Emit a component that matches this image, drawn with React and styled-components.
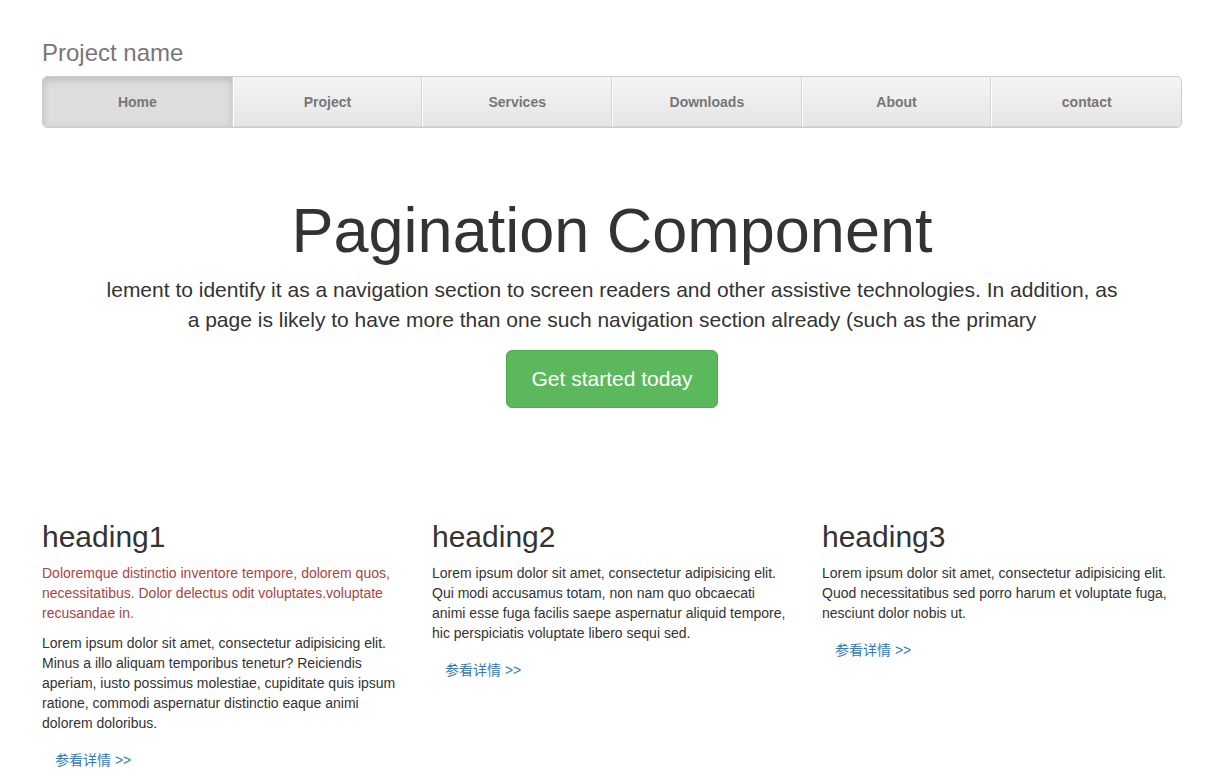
import React from 'react';
import styled, { createGlobalStyle } from 'styled-components';

const GlobalStyle = createGlobalStyle`
  html, body {
    margin: 0;
    padding: 0;
  }
  body {
    padding-top: 20px;
    font-family: "Liberation Sans", Helvetica, Arial, "Noto Sans CJK SC", sans-serif;
    font-size: 14px;
    line-height: 1.42857143;
    color: #333;
    background: #fff;
  }
  * { box-sizing: border-box; }
`;

const Container = styled.div`
  width: 1170px;
  margin: 0 auto;
  padding: 0 15px;
`;

const Masthead = styled.div``;

const ProjectName = styled.h3`
  margin: 20px 0 10px;
  font-size: 24px;
  font-weight: 500;
  line-height: 1.1;
  color: #777;
`;

const Nav = styled.ul`
  display: flex;
  margin: 0;
  padding: 0;
  list-style: none;
  max-height: 52px;
  background-color: #eee;
  border: 1px solid #ccc;
  border-radius: 5px;
`;

const NavItem = styled.li`
  flex: 1 1 0;
  display: flex;
`;

const NavLink = styled.a`
  flex: 1;
  display: block;
  padding: 15px 0;
  font-weight: bold;
  font-size: 14px;
  line-height: 20px;
  color: #777;
  text-align: center;
  text-decoration: none;
  border-bottom: 1px solid #d5d5d5;
  border-left: ${(p) => (p.$first ? '0' : '1px solid #fff')};
  border-right: ${(p) => (p.$last ? '0' : '1px solid #d5d5d5')};
  border-radius: ${(p) => (p.$first ? '5px 0 0 5px' : p.$last ? '0 5px 5px 0' : '0')};
  background-color: ${(p) => (p.$active ? '#ddd' : '#e5e5e5')};
  background-image: ${(p) => (p.$active ? 'none' : 'linear-gradient(to bottom, #f5f5f5 0%, #e5e5e5 100%)')};
  box-shadow: ${(p) => (p.$active ? 'inset 0 3px 7px rgba(0,0,0,.15)' : 'none')};
`;

const Jumbotron = styled.div`
  padding: 48px 60px;
  margin-bottom: 30px;
  text-align: center;
`;

const Title = styled.h1`
  margin: 20px 0 9px;
  font-size: 63px;
  font-weight: 500;
  line-height: 1.1;
  color: #333;
`;

const Lead = styled.p`
  margin: 0 0 15px;
  font-size: 21px;
  line-height: 30px;
  font-weight: 200;
`;

const BigButton = styled.a`
  display: inline-block;
  padding: 14px 24px;
  font-size: 21px;
  line-height: 1.3333;
  color: #fff;
  text-decoration: none;
  background-color: #5cb85c;
  border: 1px solid #4cae4c;
  border-radius: 6px;
`;

const Row = styled.div`
  display: grid;
  grid-template-columns: repeat(3, 1fr);
  margin: 0 -15px;
  padding-top: 14px;
`;

const Col = styled.div`
  padding: 0 15px;
`;

const Heading = styled.h2`
  margin: 20px 0 10px;
  font-size: 30px;
  font-weight: 500;
  line-height: 1.1;
`;

const Text = styled.p`
  margin: 0 0 10px;
  color: ${(p) => (p.$danger ? '#a94442' : '#333')};
`;

const MoreLink = styled.a`
  display: inline-block;
  padding: 6px 12px;
  border: 1px solid transparent;
  color: #337ab7;
  text-decoration: none;
  line-height: 1.42857143;
`;

const navItems = ['Home', 'Project', 'Services', 'Downloads', 'About', 'contact'];

const columns = [
  {
    title: 'heading1',
    paras: [
      {
        danger: true,
        text: 'Doloremque distinctio inventore tempore, dolorem quos, necessitatibus. Dolor delectus odit voluptates.voluptate recusandae in.',
      },
      {
        text: 'Lorem ipsum dolor sit amet, consectetur adipisicing elit. Minus a illo aliquam temporibus tenetur? Reiciendis aperiam, iusto possimus molestiae, cupiditate quis ipsum ratione, commodi aspernatur distinctio eaque animi dolorem doloribus.',
      },
    ],
  },
  {
    title: 'heading2',
    paras: [
      {
        text: 'Lorem ipsum dolor sit amet, consectetur adipisicing elit. Qui modi accusamus totam, non nam quo obcaecati animi esse fuga facilis saepe aspernatur aliquid tempore, hic perspiciatis voluptate libero sequi sed.',
      },
    ],
  },
  {
    title: 'heading3',
    paras: [
      {
        text: 'Lorem ipsum dolor sit amet, consectetur adipisicing elit. Quod necessitatibus sed porro harum et voluptate fuga, nesciunt dolor nobis ut.',
      },
    ],
  },
];

const App = () => {
  return (
    <Container>
      <GlobalStyle />
      <Masthead>
        <ProjectName>Project name</ProjectName>
        <Nav>
          {navItems.map((item, i) => (
            <NavItem key={item}>
              <NavLink
                href="#"
                $active={i === 0}
                $first={i === 0}
                $last={i === navItems.length - 1}
              >
                {item}
              </NavLink>
            </NavItem>
          ))}
        </Nav>
      </Masthead>

      <Jumbotron>
        <Title>Pagination Component</Title>
        <Lead>
          lement to identify it as a navigation section to screen readers and other assistive
          technologies. In addition, as a page is likely to have more than one such navigation
          section already (such as the primary
        </Lead>
        <BigButton href="#">Get started today</BigButton>
      </Jumbotron>

      <Row>
        {columns.map((col) => (
          <Col key={col.title}>
            <Heading>{col.title}</Heading>
            {col.paras.map((p, i) => (
              <Text key={i} $danger={p.danger}>
                {p.text}
              </Text>
            ))}
            <MoreLink href="#">参看详情 &gt;&gt;</MoreLink>
          </Col>
        ))}
      </Row>
    </Container>
  );
};

export default App;
